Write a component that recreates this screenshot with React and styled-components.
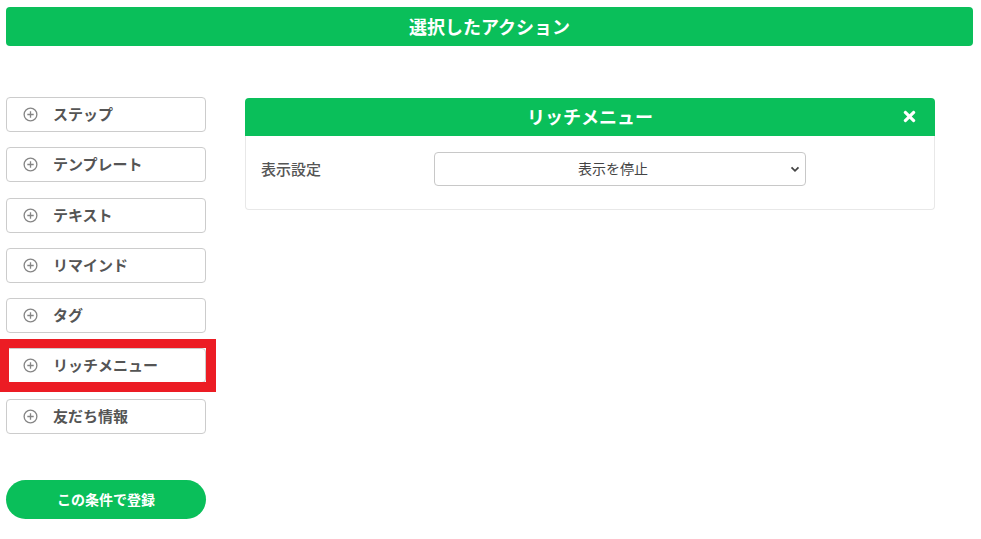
import styled, { createGlobalStyle } from "styled-components"
import { FaTimes } from "react-icons/fa"

const GREEN = "#0abf5a"
const TEXT = "#555555"

const actions = ["ステップ", "テンプレート", "テキスト", "リマインド", "タグ", "リッチメニュー", "友だち情報"]

export default function App() {
    return (
        <>
            <GlobalStyle />
            <Page>
                <TopBar>選択したアクション</TopBar>
                <Main>
                    <Sidebar>
                        <ActionList>
                            {actions.map((name) => (
                                <ActionItem key={name} marked={name === "リッチメニュー"}>
                                    <PlusIcon />
                                    {name}
                                </ActionItem>
                            ))}
                        </ActionList>
                        <SubmitButton>この条件で登録</SubmitButton>
                    </Sidebar>
                    <Panel>
                        <PanelHeader>
                            リッチメニュー
                            <CloseButton><FaTimes /></CloseButton>
                        </PanelHeader>
                        <PanelBody>
                            <FieldLabel>表示設定</FieldLabel>
                            <SelectWrap>
                                <Select defaultValue="stop">
                                    <option value="stop">表示を停止</option>
                                    <option value="show">表示する</option>
                                </Select>
                                <Chevron viewBox="0 0 10 10">
                                    <path d="M1.5 3.3 L5 6.8 L8.5 3.3" />
                                </Chevron>
                            </SelectWrap>
                        </PanelBody>
                    </Panel>
                </Main>
            </Page>
        </>
    )
}

function PlusIcon() {
    return (
        <IconSvg viewBox="0 0 16 16">
            <circle cx="8" cy="8" r="6.8" />
            <path d="M8 4.6 V11.4 M4.6 8 H11.4" />
        </IconSvg>
    )
}

const GlobalStyle = createGlobalStyle`
    body {
        margin: 0;
        background: #ffffff;
        font-family: "Noto Sans CJK JP", "Noto Sans", sans-serif;
    }
`
const Page = styled.div`
    padding: 7px 8px 0 6px;
    width: 981px;
    box-sizing: border-box;
`
const TopBar = styled.div`
    height: 39px;
    background: ${GREEN};
    border-radius: 4px;
    color: #ffffff;
    font-size: 18px;
    font-weight: 700;
    display: flex;
    align-items: center;
    justify-content: center;
    padding-bottom: 2px;
    box-sizing: border-box;
`
const Main = styled.div`
    display: flex;
    align-items: flex-start;
    margin-top: 51px;
`
const Sidebar = styled.div`
    width: 200px;
    display: flex;
    flex-direction: column;
`
const ActionList = styled.div`
    display: flex;
    flex-direction: column;
    gap: 15.3px;
`
const ActionItem = styled.div`
    position: relative;
    height: 35px;
    box-sizing: border-box;
    border: 1px solid #cccccc;
    border-radius: 4px;
    background: #ffffff;
    display: flex;
    align-items: center;
    gap: 15px;
    padding: 0 0 2px 16px;
    font-size: 15px;
    font-weight: 700;
    color: ${TEXT};
    &::after {
        content: "";
        display: ${(props) => (props.marked ? "block" : "none")};
        position: absolute;
        left: -7px;
        top: -10px;
        right: -11px;
        bottom: -10px;
        border-style: solid;
        border-color: #ec1c24;
        border-width: 9px 10px 10px 9px;
    }
`
const IconSvg = styled.svg`
    width: 15px;
    height: 15px;
    margin-top: 2px;
    fill: none;
    stroke: #858585;
    stroke-width: 1.4;
`
const SubmitButton = styled.button`
    margin-top: 46px;
    height: 39px;
    border: none;
    border-radius: 20px;
    background: ${GREEN};
    color: #ffffff;
    font-family: inherit;
    font-size: 14px;
    font-weight: 700;
    padding-bottom: 2px;
`
const Panel = styled.div`
    margin-left: 39px;
    margin-top: 1px;
    width: 690px;
`
const PanelHeader = styled.div`
    position: relative;
    height: 38px;
    background: ${GREEN};
    border-radius: 4px 4px 0 0;
    color: #ffffff;
    font-size: 18px;
    font-weight: 700;
    display: flex;
    align-items: center;
    justify-content: center;
    padding-bottom: 2px;
    box-sizing: border-box;
`
const CloseButton = styled.span`
    position: absolute;
    right: 17px;
    top: 10px;
    display: flex;
    font-size: 17px;
`
const PanelBody = styled.div`
    border: 1px solid #e8e8e8;
    border-top: none;
    border-radius: 0 0 4px 4px;
    padding: 16px 15px 23px;
    display: flex;
    align-items: center;
`
const FieldLabel = styled.div`
    width: 173px;
    font-size: 15px;
    font-weight: 500;
    color: ${TEXT};
    padding-bottom: 2px;
`
const SelectWrap = styled.div`
    position: relative;
    width: 372px;
`
const Select = styled.select`
    appearance: none;
    width: 100%;
    height: 34px;
    border: 1px solid #c8c8c8;
    border-radius: 4px;
    background: #ffffff;
    font-family: inherit;
    font-size: 14px;
    color: #444444;
    text-align: center;
    text-align-last: center;
    padding: 0 34px 2px 20px;
`
const Chevron = styled.svg`
    position: absolute;
    right: 6px;
    top: 12px;
    width: 10px;
    height: 10px;
    fill: none;
    stroke: #444444;
    stroke-width: 1.8;
    pointer-events: none;
`
